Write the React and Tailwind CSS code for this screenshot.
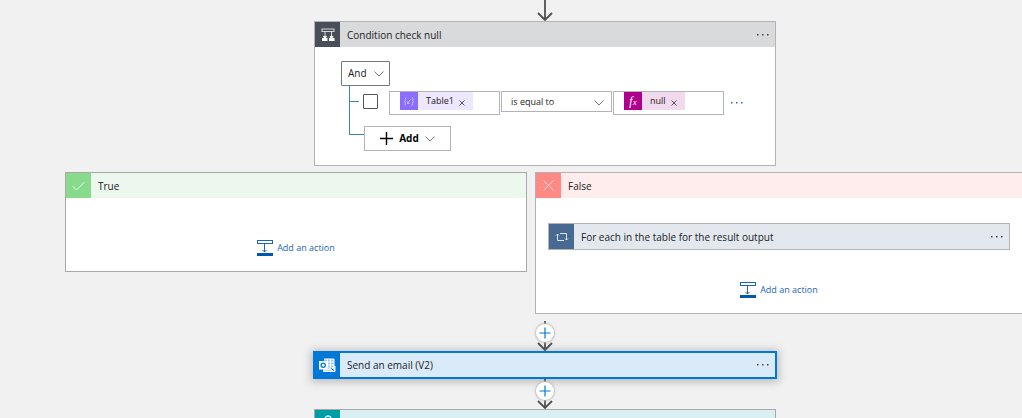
import React from "react";

function ConditionIcon() {
  return (
    <svg width="14" height="14" viewBox="0 0 14 14" fill="none" stroke="#d5d8db" strokeWidth="1" aria-hidden="true">
      <rect x="1" y="1" width="12" height="2.5" />
      <path d="M4 3.500v5.500M10.500 3.500v5.500" />
      <path d="M2 8h4l-1 2h1.500v3H1v-3h2zM8.500 8h4l-1 2H13.500v3H8v-3h1.500z" fill="#fff" stroke="none" />
    </svg>
  );
}

function LoopIcon() {
  return (
    <svg width="14" height="12" viewBox="0 0 14 12" fill="none" stroke="#dbe4ef" strokeWidth="1" aria-hidden="true">
      <path d="M5 2.500h6.500V9M2.500 3v6.500H9M1 4.500L2.500 3 4 4.500M10 7.500L11.500 9 13 7.500" />
    </svg>
  );
}

function OutlookIcon() {
  return (
    <svg width="17" height="15" viewBox="0 0 17 15" fill="none" aria-hidden="true">
      <rect x="5" y="1" width="10" height="9" fill="#9ccbf2" />
      <path d="M5 1h10v9M8.500 1v9M11.500 1v9M8 4h7M8 7h7" stroke="#fff" />
      <path d="M4 9h12v5H4z" fill="#c9e3f8" />
      <path d="M5 13.500h11V8l-4 3.500-2-1" stroke="#fff" />
      <path d="M12 10.500l3 2" stroke="#0078d7" />
      <rect x="0" y="3" width="8.500" height="8.500" fill="#fff" />
      <circle cx="4.200" cy="7.300" r="2.100" stroke="#0078d7" strokeWidth="1.300" />
    </svg>
  );
}

function TealIcon() {
  return (
    <svg width="12" height="16" viewBox="0 0 12 16" fill="none" stroke="#d9f1f2" strokeWidth="1.300" aria-hidden="true">
      <circle cx="6" cy="4" r="3" />
      <path d="M1 15v-3q0-3 5-3t5 3v3" />
    </svg>
  );
}

function AddActionIcon() {
  return (
    <svg width="16" height="16" viewBox="0 0 16 16" fill="none" stroke="#1a66b5" strokeWidth="1" aria-hidden="true">
      <rect x=".5" y=".5" width="15" height="3" />
      <path d="M7.500 3.500v8.500M5.500 10l2 2 2-2" />
      <path d="M0 13h16v3H0z" fill="#0058ad" stroke="none" />
    </svg>
  );
}

function Chevron() {
  return (
    <svg width="10" height="6" viewBox="0 0 10 6" fill="none" stroke="#777" strokeWidth="1" aria-hidden="true">
      <path d="M.5 .5L5 5l4.500-4.500" />
    </svg>
  );
}

function Arrow({ height }) {
  return (
    <svg width="16" height={height} viewBox={`0 0 16 ${height}`} fill="none" stroke="#505050" strokeWidth="1.800" aria-hidden="true">
      <path d={`M8 0V${height - 1}M1 ${height - 8}l7 7 7-7`} />
    </svg>
  );
}

function Connector() {
  return (
    <div className="relative flex h-[30px] justify-center">
      <Arrow height={30} />
      <button
        type="button"
        aria-label="Insert a new step"
        className="absolute top-[3px] flex h-[18px] w-[18px] items-center justify-center rounded-full bg-white shadow-[0_0_2px_1px_#bdbdbd]"
      >
        <svg width="12" height="12" viewBox="0 0 12 12" stroke="#0078d7" aria-hidden="true">
          <path d="M6 .5v11M.5 6h11" strokeWidth="1.200" />
        </svg>
      </button>
    </div>
  );
}

function Dots({ label, className = "text-[#444]" }) {
  return (
    <button type="button" aria-label={label} className={`flex h-5 w-5 shrink-0 items-center justify-center ${className}`}>
      <svg width="12" height="2" viewBox="0 0 12 2" fill="currentColor" aria-hidden="true">
        <path d="M0 0h1.500v1.500H0zM5 0h1.500v1.500H5zM10 0h1.500v1.500H10z" />
      </svg>
    </button>
  );
}

function Header({ icon, iconClass, title, children, className }) {
  return (
    <div className={`flex items-center ${className}`}>
      <span className={`flex h-full w-[25px] shrink-0 items-center justify-center ${iconClass}`}>{icon}</span>
      {title && <h2 className="ml-[7px] flex-1 text-[10px] leading-4 text-[#222]">{title}</h2>}
      {children}
    </div>
  );
}

function Token({ icon, name, iconClass, bodyClass }) {
  return (
    <span className="flex h-[18px] shrink-0 items-center">
      <span className={`flex h-full w-[18px] items-center justify-center ${iconClass}`}>{icon}</span>
      <span className={`flex h-full items-center gap-[5px] px-2 text-[9px] text-[#222] ${bodyClass}`}>
        {name}
        <button type="button" aria-label={`Remove ${name}`} className="pt-1">
          <svg width="6" height="6" viewBox="0 0 6 6" stroke="#555" aria-hidden="true">
            <path d="M.5 .5l5 5M5.500 .5l-5 5" />
          </svg>
        </button>
      </span>
    </span>
  );
}

function ValueField({ label, children }) {
  return (
    <div className="flex h-6 w-[111px] items-start border border-[#b3b3b3] bg-white pl-[10px]">
      {children}
      <input aria-label={label} className="h-full w-0 min-w-0 flex-1 text-[9px] outline-none" />
    </div>
  );
}

function AddAction() {
  return (
    <button type="button" className="flex items-center gap-1 text-[9px] leading-4 text-[#1a66b5]">
      <AddActionIcon />
      Add an action
    </button>
  );
}

function ConditionCard() {
  return (
    <section className="w-[462px] border border-[#b3b3b3] bg-white">
      <Header icon={<ConditionIcon />} iconClass="bg-[#484f58]" title="Condition check null" className="h-[25px] bg-[#d9dadc]">
        <Dots label="Condition menu" className="mr-[2px] text-[#444]" />
      </Header>
      <div className="px-[26px] pt-[14px] pb-[14px]">
        <button type="button" className="flex h-[25px] w-[49px] items-center justify-between rounded-[1px] border border-[#777] pr-[5px] pl-[6px] text-[10px] text-[#222]">
          And
          <Chevron />
        </button>
        <div className="ml-2 flex h-8 items-start border-l border-[#3b82c4] pt-[5px]">
          <div className="flex h-[21px] items-center">
            <span className="h-px w-[9px] bg-[#3b82c4]" />
            <input type="checkbox" aria-label="Select row" className="mr-[11px] ml-[4px] h-[15px] w-[15px] appearance-none rounded-[1px] border border-[#555] bg-white" />
          </div>
          <ValueField label="Left value">
            <Token
              name="Table1"
              iconClass="bg-[#8c6cff]"
              bodyClass="bg-[#ede7ff]"
              icon={
                <svg width="10" height="9" viewBox="0 0 10 9" fill="none" stroke="#d8ccff" strokeWidth=".8" aria-hidden="true">
                  <path d="M2.500 .5Q1 .5 1.300 2.500T.3 4.500Q1.500 4.500 1.200 6.500T2 8.500M7.800 .5Q9.300 .5 8.800 2.500T9.700 4.500Q8.500 4.500 8.700 6.500T7.200 8.500M3.500 6.500l3-4M3.500 4.500v2h2" />
                </svg>
              }
            />
          </ValueField>
          <div className="relative ml-px">
            <select aria-label="Operator" className="block h-[21px] w-[111px] appearance-none border border-[#b3b3b3] bg-white pl-[9px] text-[9px] text-[#222]">
              <option>is equal to</option>
            </select>
            <span className="pointer-events-none absolute top-[9px] right-2">
              <Chevron />
            </span>
          </div>
          <div className="ml-px">
            <ValueField label="Right value">
              <Token
                name="null"
                iconClass="bg-[#ad008c]"
                bodyClass="bg-[#f1d9ee]"
                icon={
                  <span className="font-['Liberation_Serif',serif] text-[12px] leading-none text-white italic">
                    f<span className="text-[9px]">x</span>
                  </span>
                }
              />
            </ValueField>
          </div>
          <Dots label="Row menu" className="ml-[3px] pt-1 text-[#2a6ea6]" />
        </div>
        <div className="ml-2 flex items-start">
          <span className="h-[17px] w-[15px] border-b border-l border-[#3b82c4]" />
          <button type="button" className="mt-2 flex h-[25px] w-[87px] items-center justify-center gap-[6px] border border-[#b3b3b3] bg-white text-[10px] font-bold text-black">
            <svg width="13" height="13" viewBox="0 0 13 13" stroke="#000" aria-hidden="true">
              <path d="M6.500 0v13M0 6.500h13" strokeWidth="1.400" />
            </svg>
            Add
            <Chevron />
          </button>
        </div>
      </div>
    </section>
  );
}

export default function App() {
  return (
    <main className="h-screen overflow-hidden bg-[#f1f1f1] font-['Open_Sans',sans-serif]">
      <div className="ml-[65px] flex w-max flex-col items-center">
        <Arrow height={21} />
        <ConditionCard />
        <div className="mt-[6px] flex items-start gap-2">
          <section className="w-[462px] border border-[#a8a8a8] bg-white">
            <Header
              title="True"
              className="h-[25px] bg-[#ecf7ee]"
              iconClass="bg-[#88da8d]"
              icon={
                <svg width="13" height="10" viewBox="0 0 13 10" fill="none" stroke="#e6fae7" aria-hidden="true">
                  <path d="M.5 5l4 4L12.500 1" />
                </svg>
              }
            />
            <div className="flex justify-center pt-[42px] pb-[15px]">
              <AddAction />
            </div>
          </section>
          <section className="border border-[#b3b3b3] bg-white">
            <Header
              title="False"
              className="h-[25px] bg-[#ffecec]"
              iconClass="bg-[#ff8a85]"
              icon={
                <svg width="11" height="11" viewBox="0 0 11 11" fill="none" stroke="#ffdcda" aria-hidden="true">
                  <path d="M.5 .5l10 10M10.500 .5l-10 10" />
                </svg>
              }
            />
            <div className="flex flex-col items-center pt-[25px] pr-[14px] pb-[15px] pl-3">
              <div className="mb-8 w-[462px] border border-[#b3b3b3]">
                <Header title="For each in the table for the result output" className="h-[25px] bg-[#e3e8ef]" iconClass="bg-[#486991]" icon={<LoopIcon />}>
                  <Dots label="Loop menu" className="mr-[2px] text-[#444]" />
                </Header>
              </div>
              <AddAction />
            </div>
          </section>
        </div>
        <div className="mt-[7px]">
          <Connector />
        </div>
        <section className="w-[464px] border-2 border-[#0078d7] shadow-[0_1px_8px_2px_#bcbcbc]">
          <Header title="Send an email (V2)" className="h-6 bg-[#d9eaf9]" iconClass="bg-[#0078d7]" icon={<OutlookIcon />}>
            <Dots label="Email menu" className="mr-[2px] text-[#444]" />
          </Header>
        </section>
        <Connector />
        <section className="w-[462px] border border-[#a8a8a8]">
          <Header title="" className="h-[25px] bg-[#d9eff1]" iconClass="bg-[#009da5]" icon={<TealIcon />} />
        </section>
      </div>
    </main>
  );
}
